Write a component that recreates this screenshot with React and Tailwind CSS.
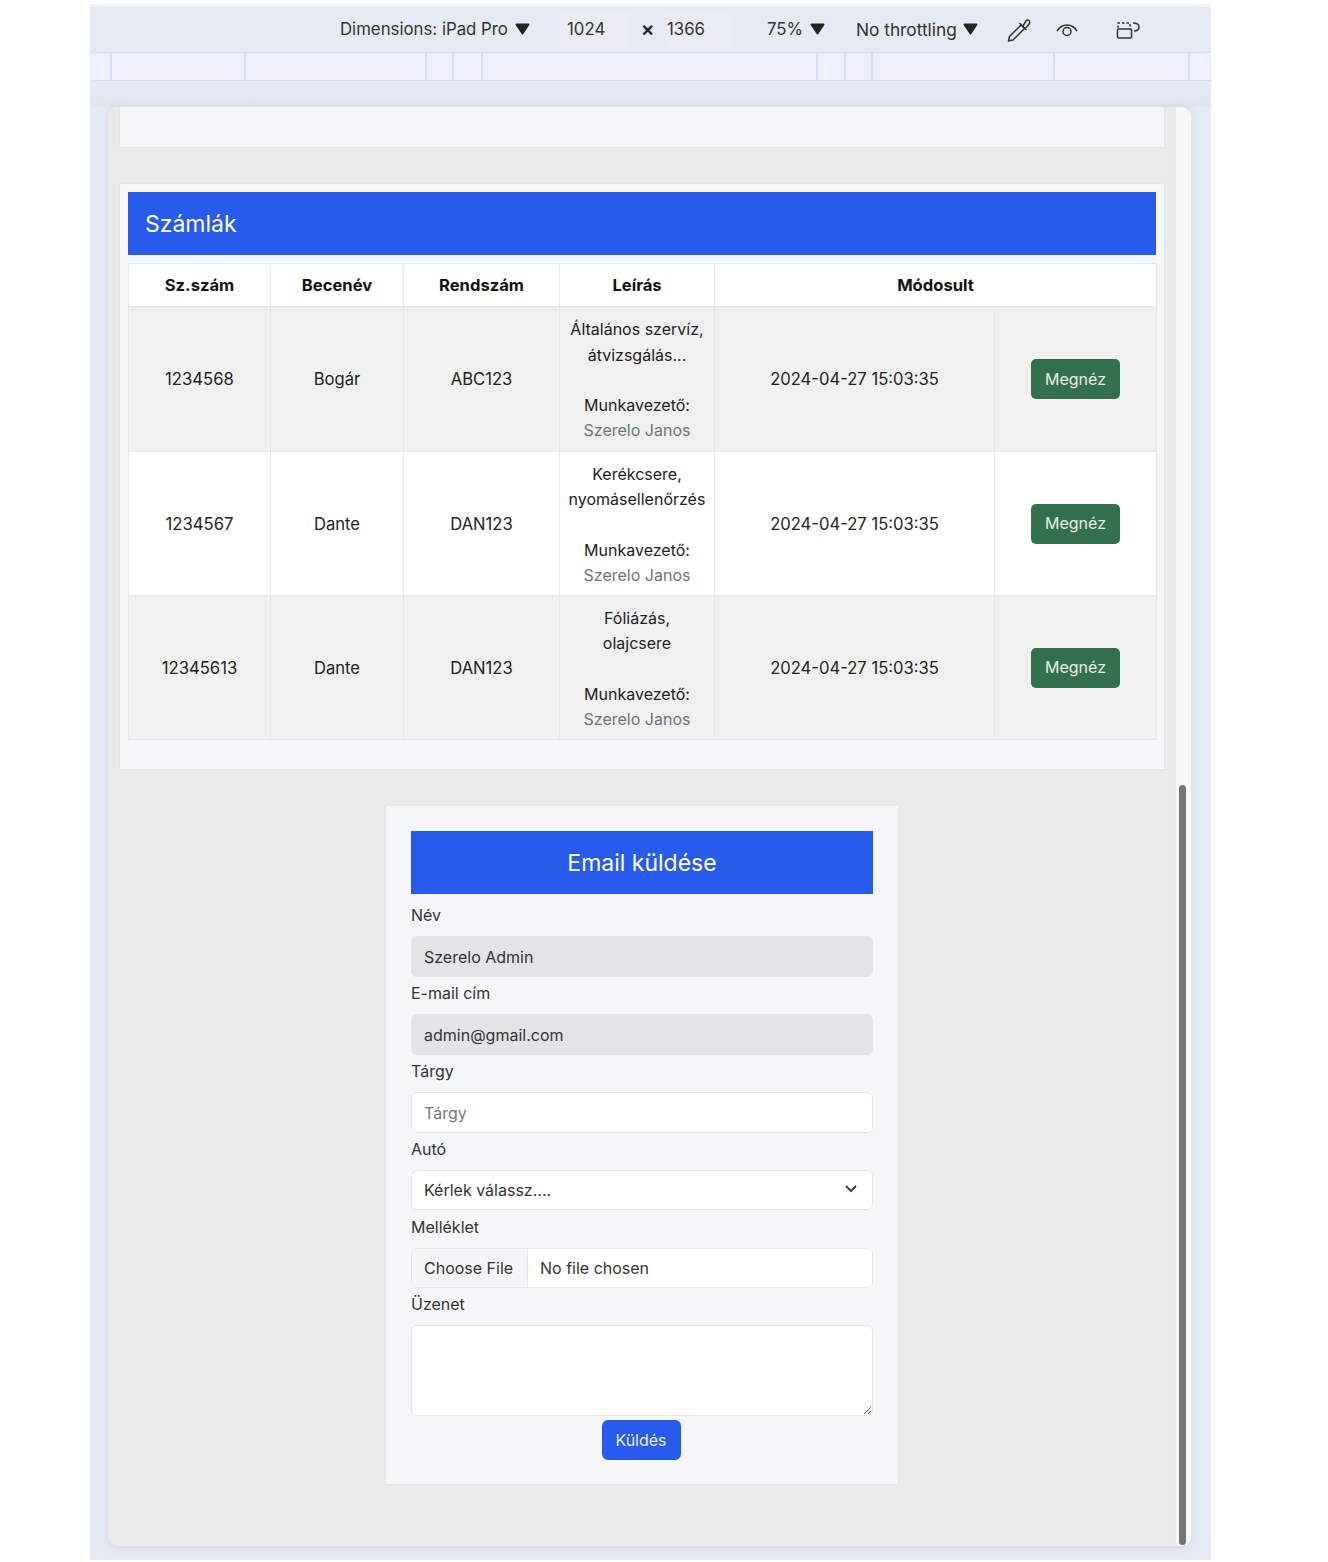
import React from "react";

const invoices = [
  { no: "1234568", nick: "Bogár", plate: "ABC123", desc: ["Általános szervíz,", "átvizsgálás..."], rowClass: "h-[145px] bg-[#f0f0f0]" },
  { no: "1234567", nick: "Dante", plate: "DAN123", desc: ["Kerékcsere,", "nyomásellenőrzés"], rowClass: "h-[144px] bg-white" },
  { no: "12345613", nick: "Dante", plate: "DAN123", desc: ["Fóliázás,", "olajcsere"], rowClass: "h-[144px] bg-[#f0f0f0]" },
];

const Triangle = () => (
  <svg width="15" height="12" viewBox="0 0 15 12" className="mb-[3px] block">
    <path d="M1.500 1.500h12L7.500 10.500z" fill="#222" stroke="#222" strokeWidth="2" strokeLinejoin="round" />
  </svg>
);

const Cell = ({ children, className = "" }) => (
  <td className={`border border-[#e6e7ea] px-[8px] text-center align-middle ${className}`}>{children}</td>
);

const Head = ({ children, colSpan }) => (
  <th colSpan={colSpan} className="h-[43px] border border-[#e6e7ea] bg-white pt-[2px] text-center text-[16.600px] font-bold text-[#111]">
    {children}
  </th>
);

const Field = ({ label, children }) => (
  <div className="mb-[4px]">
    <div className="mb-[8px] h-[25px] leading-[25px] text-[#333]">{label}</div>
    {children}
  </div>
);

const inputClass = "block h-[41px] w-full rounded-[6px] border border-[#e4e5e8] px-[12px] text-[#333] outline-none";

export default function App() {
  return (
    <div className="min-h-[1562px] bg-white pl-[90px] pt-[4px] font-['Inter','Liberation_Sans',sans-serif] text-[16px] text-[#222]">
      <div className="h-[1556px] w-[1121px] bg-[#e6eaf4]">
        {/* toolbar */}
        <div className="flex h-[48px] items-center border-t-[3px] border-[#f2f3f6] pl-[250px] pt-[1px] text-[#333]">
          <span className="w-[175px] text-[16.800px]">Dimensions: iPad Pro</span>
          <Triangle />
          <div className="ml-[29px] flex h-[36px] w-[70px] items-center bg-[#e9ecf5] pl-[8px] text-[16.800px]">1024</div>
          <span className="ml-[12px] w-[26px] font-bold text-[#222]">✕</span>
          <div className="flex h-[36px] w-[65px] items-center bg-[#e9ecf5] text-[16.800px]">1366</div>
          <span className="ml-[35px] w-[43px] text-[16.800px]">75%</span>
          <Triangle />
          <span className="ml-[31px] w-[107px] text-[17.300px]">No throttling</span>
          <Triangle />
          <svg width="26" height="26" viewBox="0 0 26 26" className="ml-[28px]" fill="none" stroke="#333" strokeWidth="1.500" strokeLinejoin="round">
            <path d="M15 8 3.500 19.500 2.500 24l4.500-1L18.500 11.500z" />
            <path d="M13.500 6 20.500 13M17 9l3-5c1-1.500 3-1 3.500 0s.5 2-.5 3l-4 5" />
          </svg>
          <svg width="24" height="16" viewBox="0 0 24 16" className="ml-[23px]" fill="none" stroke="#333" strokeWidth="1.500">
            <path d="M2 9c5-8 15-8 20 0" />
            <circle cx="12" cy="9.500" r="4" />
          </svg>
          <svg width="26" height="20" viewBox="0 0 26 20" className="ml-[37px]" fill="none" stroke="#333" strokeWidth="1.500">
            <path d="M2 8V3h12v5" strokeDasharray="2.500 2" />
            <rect x="1.500" y="9" width="14" height="9" rx="1" />
            <path d="M17 3c4 0 6 1.500 6 4s-2 4-5 4" />
          </svg>
        </div>
        {/* ruler */}
        <div className="flex h-[29px] border-y border-[#cfdcf6] bg-[#edf0fa]">
          <div className="w-[22px] border-r-2 border-[#d3e0f8]" />
          <div className="w-[134px] border-r-2 border-[#d3e0f8]" />
          <div className="w-[181px] border-r-2 border-[#d3e0f8]" />
          <div className="w-[27px] border-r-2 border-[#d3e0f8]" />
          <div className="w-[29px] border-r-2 border-[#d3e0f8]" />
          <div className="w-[335px] border-r-2 border-[#d3e0f8]" />
          <div className="w-[28px] border-r-2 border-[#d3e0f8]" />
          <div className="w-[27px] border-r-2 border-[#d3e0f8]" />
          <div className="w-[182px] border-r-2 border-[#d3e0f8]" />
          <div className="w-[135px] border-r-2 border-[#d3e0f8]" />
        </div>
        <div className="h-[26px] bg-gradient-to-b from-[#e6eaf4] to-[#e1e5ee]" />

        {/* device viewport */}
        <div className="ml-[18px] flex h-[1441px] w-[1083px] overflow-hidden rounded-[10px] border-b-2 border-[#dcdcdc] shadow-[0_0_8px_rgba(200,205,220,0.6)]">
          <div className="w-[1067px] bg-[#eaeaea] pl-[11px] pr-[10px]">
            <div className="h-[41px] border-x border-b border-[#e4e5e8] bg-[#f5f6f8]" />

            <div className="mt-[35px] h-[587px] border border-[#e4e5e8] bg-[#f5f6f8] px-[8px] pt-[8px]">
              <div className="flex h-[63px] items-center bg-[#285aeb] pl-[17px] pt-[1px] text-[23px] text-white">Számlák</div>
              <table className="mt-[8px] w-[1028px] table-fixed border-collapse leading-[25.3px]">
                <colgroup>
                  <col className="w-[142px]" />
                  <col className="w-[133px]" />
                  <col className="w-[156px]" />
                  <col className="w-[155px]" />
                  <col className="w-[280px]" />
                  <col className="w-[162px]" />
                </colgroup>
                <thead>
                  <tr>
                    <Head>Sz.szám</Head>
                    <Head>Becenév</Head>
                    <Head>Rendszám</Head>
                    <Head>Leírás</Head>
                    <Head colSpan={2}>Módosult</Head>
                  </tr>
                </thead>
                <tbody>
                  {invoices.map((inv) => (
                    <tr key={inv.no} className={inv.rowClass}>
                      <Cell className="pt-[2px] text-[16.700px]">{inv.no}</Cell>
                      <Cell className="pt-[2px] text-[16.600px]">{inv.nick}</Cell>
                      <Cell className="pt-[2px] text-[16.600px]">{inv.plate}</Cell>
                      <Cell className="!px-0 pt-[3px]">
                        {inv.desc[0]}
                        <br />
                        {inv.desc[1]}
                        <br />
                        <br />
                        Munkavezető:
                        <br />
                        <span className="text-[#6c757d]">Szerelo Janos</span>
                      </Cell>
                      <Cell className="pt-[2px] text-[16.600px]">2024-04-27 15:03:35</Cell>
                      <Cell>
                        <button className="h-[40px] w-[89px] rounded-[5px] bg-[#33704d] pt-[1px] text-[#e8f0ea]">Megnéz</button>
                      </Cell>
                    </tr>
                  ))}
                </tbody>
              </table>
            </div>

            {/* email form */}
            <div className="mx-auto mt-[35px] h-[680px] w-[514px] border border-[#e4e5e8] bg-[#f5f6f8] px-[25px] pt-[25px]">
              <div className="mb-[9px] flex h-[63px] items-center justify-center bg-[#285aeb] pt-[2px] text-[23px] text-white">Email küldése</div>
              <Field label="Név">
                <input readOnly value="Szerelo Admin" className={`${inputClass} bg-[#e3e4e8]`} />
              </Field>
              <Field label="E-mail cím">
                <input readOnly value="admin@gmail.com" className={`${inputClass} bg-[#e3e4e8]`} />
              </Field>
              <Field label="Tárgy">
                <input placeholder="Tárgy" className={`${inputClass} bg-white placeholder:text-[#777]`} />
              </Field>
              <Field label="Autó">
                <div className="relative mb-[5px]">
                  <select className="block h-[40px] w-full appearance-none rounded-[6px] border border-[#e4e5e8] bg-white px-[12px] text-[#333] outline-none">
                    <option>Kérlek válassz....</option>
                  </select>
                  <svg width="14" height="10" viewBox="0 0 14 10" className="absolute right-[15px] top-[14px]" fill="none" stroke="#444" strokeWidth="2">
                    <path d="M2 2l5 5 5-5" />
                  </svg>
                </div>
              </Field>
              <Field label="Melléklet">
                <div className="flex h-[40px] overflow-hidden rounded-[6px] border border-[#e4e5e8] bg-white text-[#333]">
                  <div className="flex w-[116px] items-center border-r border-[#e4e5e8] bg-[#f3f4f6] pl-[12px]">Choose File</div>
                  <div className="flex items-center pl-[12px]">No file chosen</div>
                </div>
              </Field>
              <Field label="Üzenet">
                <textarea className="mt-[1px] block h-[91px] w-full rounded-[6px] border border-[#e4e5e8] bg-white outline-none" />
              </Field>
              <div className="flex justify-center pr-[2px]">
                <button className="h-[40px] w-[79px] rounded-[6px] bg-[#285aeb] text-[#e6edff]">Küldés</button>
              </div>
            </div>
          </div>

          {/* scrollbar */}
          <div className="w-[16px] border-l border-[#e8e8e8] bg-[#f7f7f7] pl-[3px] pt-[678px]">
            <div className="h-[760px] w-[7px] rounded-full bg-[#757575]" />
          </div>
        </div>
      </div>
    </div>
  );
}
